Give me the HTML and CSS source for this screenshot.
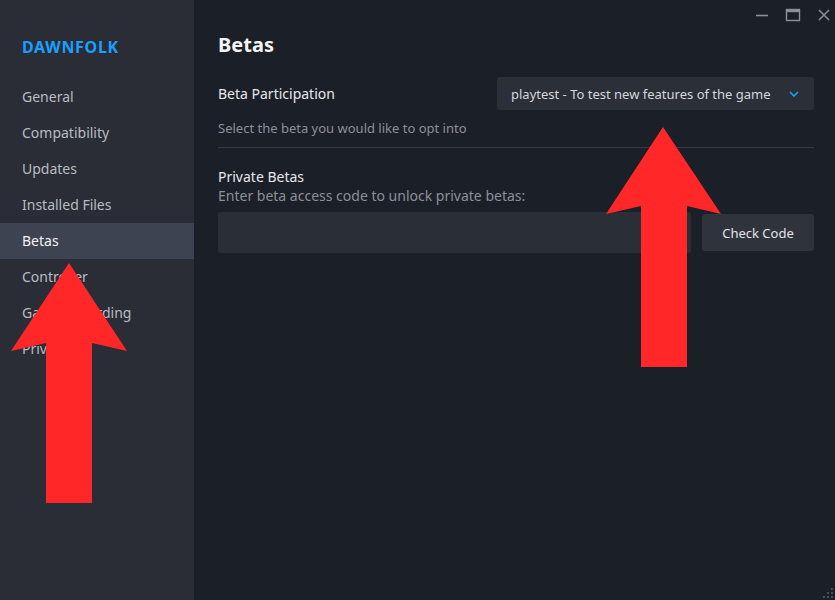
FILE: index.html
```html
<!DOCTYPE html>
<html>
<head>
<meta charset="utf-8">
<link rel="stylesheet" href="styles.css">
</head>
<body>
<div class="app">
  <aside class="sidebar">
    <div class="game-title">DAWNFOLK</div>
    <nav class="nav">
      <div class="nav-item">General</div>
      <div class="nav-item">Compatibility</div>
      <div class="nav-item">Updates</div>
      <div class="nav-item">Installed Files</div>
      <div class="nav-item active">Betas</div>
      <div class="nav-item">Controller</div>
      <div class="nav-item">Game Recording</div>
      <div class="nav-item">Privacy</div>
    </nav>
  </aside>
  <main class="main">
    <div class="titlebar">
      <svg class="wc" width="14" height="14" viewBox="0 0 14 14"><path d="M1 7.5h12" stroke="#8a919b" stroke-width="1.6"/></svg>
      <svg class="wc" width="16" height="14" viewBox="0 0 16 14"><rect x="1.5" y="1.5" width="13" height="11" fill="none" stroke="#8a919b" stroke-width="1.4"/><path d="M1.5 3h13" stroke="#8a919b" stroke-width="2.4"/></svg>
      <svg class="wc" width="14" height="14" viewBox="0 0 14 14"><path d="M2 2l10 10M12 2L2 12" stroke="#8a919b" stroke-width="1.5"/></svg>
    </div>
    <h1 class="page-title">Betas</h1>
    <div class="row">
      <div class="label">Beta Participation</div>
      <div class="select">
        <span class="select-text">playtest - To test new features of the game</span>
        <svg width="12" height="8" viewBox="0 0 12 8"><path d="M2 2l4 4 4-4" fill="none" stroke="#1a9fff" stroke-width="1.6"/></svg>
      </div>
    </div>
    <div class="hint">Select the beta you would like to opt into</div>
    <div class="sep"></div>
    <div class="label">Private Betas</div>
    <div class="hint2">Enter beta access code to unlock private betas:</div>
    <div class="code-row">
      <div class="input"></div>
      <div class="button">Check Code</div>
    </div>
    <svg class="grip" width="12" height="12" viewBox="0 0 12 12"><g fill="#4a505a"><rect x="9" y="1" width="2" height="2"/><rect x="5" y="5" width="2" height="2"/><rect x="9" y="5" width="2" height="2"/><rect x="1" y="9" width="2" height="2"/><rect x="5" y="9" width="2" height="2"/><rect x="9" y="9" width="2" height="2"/></g></svg>
  </main>
  <svg class="arrow arrow-left" width="835" height="600" viewBox="0 0 835 600"><polygon points="69,263 127,351 92,343 92,503 46,503 46,343 11,351" fill="#ff2727"/></svg>
  <svg class="arrow" width="835" height="600" viewBox="0 0 835 600"><polygon points="663,127 721,214 687,206 687,367 641,367 641,206 606,214" fill="#ff2727"/></svg>
</div>
</body>
</html>
```
FILE: styles.css
```css
* { box-sizing: border-box; }
html, body { margin: 0; padding: 0; }
body {
  width: 835px;
  height: 600px;
  overflow: hidden;
  font-family: "Noto Sans", "DejaVu Sans", sans-serif;
  background: #1b1f27;
}
.app {
  position: relative;
  display: flex;
  width: 835px;
  height: 600px;
}
.sidebar {
  width: 194px;
  flex: none;
  background: #2a2d35;
  padding-top: 36px;
}
.game-title {
  padding-left: 22px;
  color: #1a9fff;
  font-weight: bold;
  font-size: 16px;
  line-height: 22px;
  letter-spacing: 0.7px;
}
.nav { margin-top: 21px; display: flex; flex-direction: column; }
.nav-item {
  height: 36px;
  line-height: 36px;
  padding-left: 22px;
  font-size: 14px;
  color: #b8bcc2;
}
.nav-item.active { background: #3d4350; color: #f2f3f5; }
.main {
  flex: 1;
  position: relative;
  padding: 0 21px 0 24px;
  display: flex;
  flex-direction: column;
}
.titlebar {
  display: flex;
  justify-content: flex-end;
  align-items: center;
  gap: 16px;
  height: 30px;
  margin-right: -17px;
}
.page-title {
  margin: 0;
  font-size: 20px;
  line-height: 30px;
  color: #f2f3f5;
  font-weight: bold;
}
.row {
  display: flex;
  justify-content: space-between;
  align-items: center;
  margin-top: 17px;
}
.label { font-size: 14px; color: #e6e8eb; line-height: 20px; }
.select {
  width: 317px;
  height: 33px;
  background: #2b2f38;
  border-radius: 3px;
  display: flex;
  align-items: center;
  justify-content: space-between;
  padding: 0 14px 0 14px;
}
.select-text { font-size: 13px; color: #d4d7dc; white-space: nowrap; overflow: hidden; }
.hint { margin-top: 9px; font-size: 13px; color: #8b9099; line-height: 18px; }
.sep { height: 1px; background: #363b45; margin-top: 10px; margin-bottom: 19px; }
.hint2 { font-size: 14px; color: #8b9099; line-height: 20px; margin-top: -1px; }
.code-row { display: flex; align-items: center; gap: 11px; margin-top: 6px; }
.input { width: 473px; height: 41px; background: #2a2e37; border-radius: 3px; }
.button {
  width: 112px;
  height: 37px;
  background: #2f333c;
  border-radius: 3px;
  font-size: 13px;
  color: #e3e5e8;
  display: flex;
  align-items: center;
  justify-content: center;
}
.grip { position: absolute; right: 1px; bottom: 1px; }
.arrow { position: absolute; left: 0; top: 0; pointer-events: none; }
```
